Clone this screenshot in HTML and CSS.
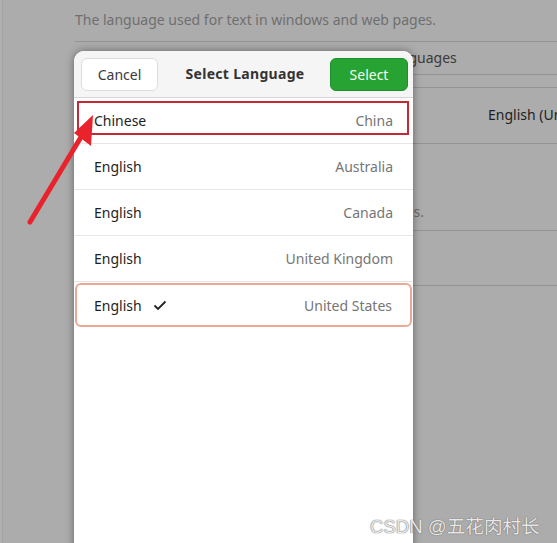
FILE: index.html
```html
<!DOCTYPE html>
<html>
<head>
<meta charset="utf-8">
<link rel="stylesheet" href="styles.css">
</head>
<body>
<div class="screen">
  <div class="page">
    <div class="desc">The language used for text in windows and web pages.</div>
    <div class="frame first">
      <div class="frame-row center">Manage Installed Languages</div>
    </div>
    <div class="frame second">
      <div class="frame-row value">English (United States)</div>
      <div class="frame-row desc-row">The format used for numbers, dates and currencies.</div>
      <div class="frame-row empty"></div>
    </div>
  </div>

  <div class="dialog">
    <div class="header">
      <button class="btn cancel">Cancel</button>
      <div class="title">Select Language</div>
      <button class="btn select">Select</button>
    </div>
    <div class="list">
      <div class="row"><span class="lang">Chinese</span><span class="region">China</span><span class="mark"></span></div>
      <div class="row"><span class="lang">English</span><span class="region">Australia</span></div>
      <div class="row"><span class="lang">English</span><span class="region">Canada</span></div>
      <div class="row"><span class="lang">English</span><span class="region">United Kingdom</span></div>
      <div class="row focused"><span class="lang">English<svg class="check" width="14" height="11" viewBox="0 0 14 11"><path d="M1.5 5.5 L5 9 L12.5 1.5" fill="none" stroke="#222" stroke-width="1.8"/></svg></span><span class="region">United States</span></div>
    </div>
  </div>

  <svg class="arrow" width="557" height="543" viewBox="0 0 557 543">
    <line x1="30" y1="222" x2="81" y2="137" stroke="#e8232b" stroke-width="5" stroke-linecap="round"/>
    <polygon points="93,115 74,133 91,146" fill="#e8232b"/>
  </svg>

  <div class="watermark">CSDN @五花肉村长</div>
</div>
</body>
</html>
```
FILE: styles.css
```css
html, body {
  margin: 0;
  padding: 0;
}
body {
  width: 557px;
  height: 543px;
  overflow: hidden;
  background: #acacac;
  font-family: "Noto Sans", "Open Sans", sans-serif;
}
.screen {
  position: relative;
  width: 557px;
  height: 543px;
  overflow: hidden;
  background: #acacac;
  box-shadow: inset 2px 0 0 #b0b0b0, inset 3px 0 0 #a3a3a3;
}
.page {
  padding: 10px 0 0 75px;
  color: #6a6a6a;
  font-size: 14px;
}
.desc {
  line-height: 20px;
  color: #6f6f6f;
}
.frame {
  width: 600px;
  border-top: 1px solid #939393;
}
.frame.first {
  margin-top: 11px;
}
.frame.second {
  margin-top: 12px;
}
.frame-row {
  border-bottom: 1px solid #939393;
  color: #2a2a2a;
}
.frame-row.center {
  height: 32px;
  line-height: 32px;
  padding-left: 192px;
  color: #3a3a3a;
}
.frame-row.value {
  height: 55px;
  line-height: 53px;
  padding-left: 413px;
  color: #1e1e1e;
}
.frame-row.desc-row {
  height: 87px;
  line-height: 136px;
  box-sizing: border-box;
  color: #6a6a6a;
  padding-left: 7px;
  overflow: hidden;
}
.frame-row.empty {
  height: 54px;
}

.dialog {
  position: absolute;
  left: 74px;
  top: 51px;
  width: 339px;
  height: 520px;
  background: #ffffff;
  border-radius: 10px 10px 0 0;
  box-shadow: 0 0 9px rgba(0, 0, 0, 0.42);
  overflow: hidden;
}
.header {
  height: 46px;
  background: #f5f5f5;
  border-bottom: 1px solid #d6d6d6;
  display: flex;
  align-items: center;
  justify-content: space-between;
  padding: 0 5px 0 7px;
}
.btn {
  height: 33px;
  border-radius: 6px;
  font-family: "Noto Sans", sans-serif;
  font-size: 14px;
  padding: 0;
  margin: 0;
}
.cancel {
  width: 77px;
  background: #ffffff;
  border: 1px solid #dcdcdc;
  color: #3a3a3a;
}
.select {
  width: 78px;
  background: #26a333;
  border: 1px solid #1f8f2b;
  color: #f2fff2;
}
.title {
  font-weight: bold;
  font-size: 14px;
  color: #333333;
  letter-spacing: 0.3px;
  margin-left: 2px;
  margin-top: -2px;
}
.list {
  display: flex;
  flex-direction: column;
}
.row {
  position: relative;
  height: 45px;
  border-bottom: 1px solid #e6e6e6;
  display: flex;
  align-items: center;
  justify-content: space-between;
  padding: 0 20px;
  font-size: 14px;
}
.lang {
  color: #1e1e1e;
  display: flex;
  align-items: center;
}
.region {
  color: #767676;
}
.check {
  margin-left: 11px;
}
.mark {
  position: absolute;
  left: 3px;
  top: 3px;
  width: 328px;
  height: 30px;
  border: 2px solid #c42a35;
}
.row.focused {
  margin: 1px 1px 0 1px;
  height: 40px;
  padding: 0 18px 0 17px;
  border: 2px solid #eba896;
  border-radius: 6px;
}
.arrow {
  position: absolute;
  left: 0;
  top: 0;
}
.watermark {
  position: absolute;
  left: 370px;
  top: 511px;
  font-family: "Liberation Sans", "Noto Sans CJK SC", sans-serif;
  font-size: 18.6px;
  color: rgba(255, 255, 255, 0.85);
  text-shadow: 0 0 1px #6a6a6a, 0 0 1px #6a6a6a;
  white-space: nowrap;
}
```
